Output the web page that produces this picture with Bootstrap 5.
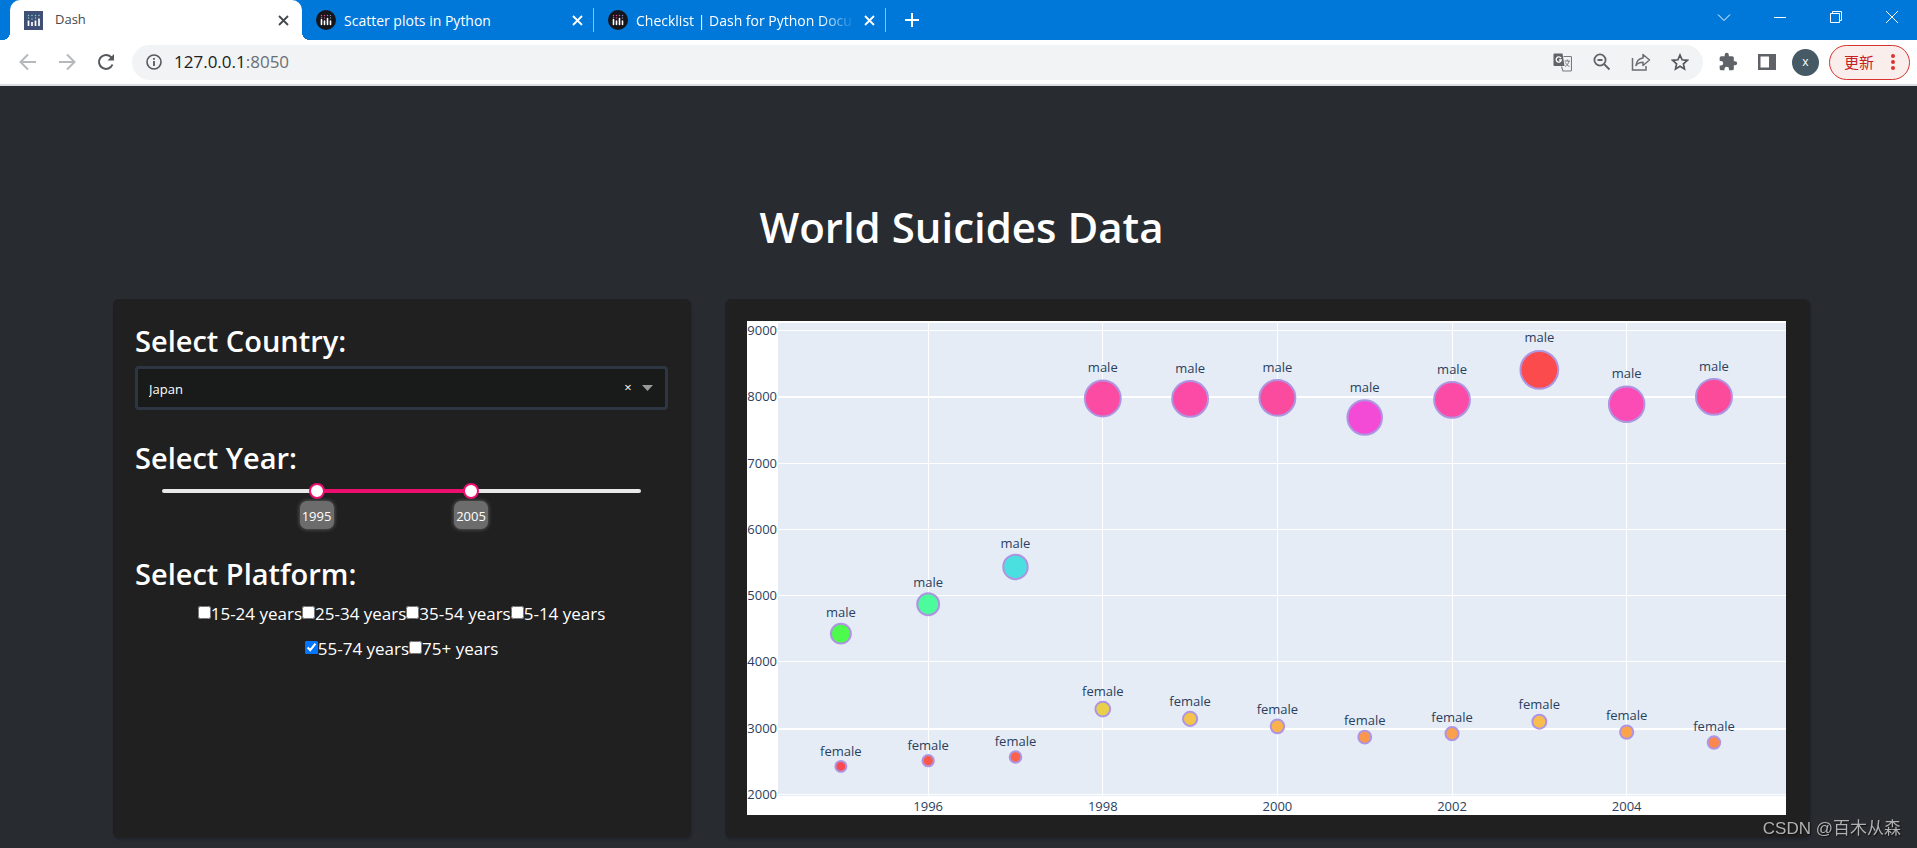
<!DOCTYPE html>
<html lang="en">
<head>
<meta charset="utf-8">
<meta name="viewport" content="width=device-width, initial-scale=1">
<title>Dash</title>
<link rel="stylesheet" href="https://cdn.jsdelivr.net/npm/bootstrap@5.3.0/dist/css/bootstrap.min.css">
<style>
  body { background: #282b2f; color: #fff; font-family: "Open Sans", "Noto Sans CJK SC", sans-serif; }
  svg { display: block; flex: none; }
  button.bare { background: none; border: 0; padding: 0; color: inherit; display: flex; align-items: center; justify-content: center; flex: none; }

  /* window frame */
  .tab-strip { background: #0078d9; height: 40px; padding-left: 10px; }
  .win-tab { width: 292px; height: 40px; padding: 0 6px 0 14px; font-size: 14px; font-weight: 500; color: #fff; position: relative; }
  .win-tab a { color: inherit; text-decoration: none; white-space: nowrap; overflow: hidden; flex: 1 1 auto; }
  .win-tab.current { background: #fff; color: #45484c; border-radius: 10px 10px 0 0; font-size: 13px; font-weight: 400; padding-right: 10px; }
  .win-tab.current::before, .win-tab.current::after { content: ""; position: absolute; bottom: 0; width: 8px; height: 8px; }
  .win-tab.current::before { left: -8px; background: radial-gradient(circle at 0 0, transparent 8px, #fff 8px); }
  .win-tab.current::after { right: -8px; background: radial-gradient(circle at 100% 0, transparent 8px, #fff 8px); }
  .win-tab.ruled::after { content: ""; position: absolute; right: 0; top: 8px; width: 1px; height: 24px; background: #8cc0ef; }
  .fade-end a { -webkit-mask-image: linear-gradient(90deg, #000 84%, transparent); mask-image: linear-gradient(90deg, #000 84%, transparent); }
  button.win-ctl { width: 56px; height: 34px; padding-left: 6px; }
  .tool-row { background: #fff; height: 46px; padding: 0 7px 0 8px; border-bottom: 2px solid #dadce0; color: #5f6368; }
  .tool-row .nav-btn { width: 39px; height: 35px; }
  .omni { background: #f1f3f4; height: 35px; border-radius: 18px; margin: 0 5px 0 7px; padding: 0 4px 0 14px; }
  .omni input { background: none; border: 0; outline: 0; padding: 0; width: 100%; }
  .omni .addr { font-size: 17px; color: #202124; white-space: nowrap; }
  .omni .port { color: #6b6f74; }
  .avatar { width: 27px; height: 27px; background: #455a64; font-size: 12px; color: #fff; }
  .update-btn { height: 35px; width: 81px; border: 1px solid #d8332c; border-radius: 18px; background: #faeeed; color: #c5221f; font-size: 15px; padding: 0 14px; }

  /* dashboard */
  .dash-page { padding: 108px 107px 10px 113px; }
  .dash-title { font-size: 42px; line-height: 66px; font-weight: 600; margin: 0 0 39px; }
  .dash-grid { display: grid; grid-template-columns: minmax(0, 578fr) minmax(0, 1085fr); gap: 34px; }
  .panel { background: #202020; border-radius: 6px; box-shadow: 1px 2px 2px #212530; padding: 22px 23px 23px 22px; }
  .panel h2 { font-size: 29px; line-height: 40px; font-weight: 600; margin: 0; }
  .country { position: relative; margin: 5px 0 28px; }
  .country select { appearance: none; width: 100%; height: 44px; border: 3px solid #2f3643; border-radius: 4px; background: #191b1a; color: #fff; font-size: 13px; padding: 3px 60px 0 11px; }
  .country .clear { position: absolute; right: 34px; top: 12px; width: 12px; height: 20px; font-size: 13px; }
  .country svg { position: absolute; right: 15px; top: 19px; pointer-events: none; }
  .inset { padding: 0 27px; }
  .year-slider { position: relative; height: 52px; margin-bottom: 24px; }
  .rail { position: absolute; top: 11px; left: 0; right: 0; height: 4px; border-radius: 2px; background: #e9e9e9; }
  .rail-fill { position: absolute; top: 0; height: 4px; background: #ed0f70; }
  .year-slider input { -webkit-appearance: none; appearance: none; position: absolute; top: 5px; left: -8px; width: calc(100% + 16px); height: 16px; margin: 0; background: none; pointer-events: none; }
  .year-slider input::-webkit-slider-thumb { -webkit-appearance: none; width: 16px; height: 16px; border: 2px solid #ed0f70; border-radius: 50%; background: #fff; pointer-events: auto; }
  .year-tip { position: absolute; top: 23px; width: 34px; height: 28px; line-height: 30px; margin-left: -17px; border-radius: 7px; background: #6c6c6c; box-shadow: 0 0 4px #6c6c6c; font-size: 13px; text-align: center; }
  .ages { padding-top: 2px; }
  .ages label { display: flex; align-items: center; font-size: 17px; line-height: 35px; white-space: nowrap; }
  .ages input { width: 13px; height: 13px; margin: 0 0 2px; }
  .chart-panel { padding-right: 24px; }
  .chart-box { height: 494px; background: #fff; }
  .chart-box svg { width: 100%; height: 100%; font-family: "Open Sans", sans-serif; font-size: 13px; }
  .chart-box text { fill: #2a3f5f; }
  .stamp { position: fixed; right: 16px; bottom: 6px; font: 17px/26px "Liberation Sans", "Noto Sans CJK SC", sans-serif; color: #b0b1b2; text-shadow: 1px 1px 1px #111; }
</style>
</head>
<body>
<svg width="0" height="0" class="position-absolute" aria-hidden="true">
  <defs>
    <g id="bars">
      <path d="M5.500 9.500v5M8.500 11v3.500M11.500 8.500v6M14.500 11v3.500" stroke="#fff" stroke-width="1.600" stroke-linecap="round"/>
      <path d="M5.500 5.500v.1M5.500 7.500v.1M8.500 5.500v.1M8.500 8v.1" stroke="#e0478c" stroke-width="1.500" stroke-linecap="round"/>
      <path d="M11.500 5.500v.1M14.500 5.500v.1M14.500 8v.1" stroke="#7d86b8" stroke-width="1.500" stroke-linecap="round"/>
    </g>
    <path id="cross" d="M1 1l9 9M10 1l-9 9" fill="none" stroke="currentColor" stroke-width="1.800"/>
  </defs>
</svg>

<header>
  <div class="tab-strip d-flex">
    <div class="win-tab current d-flex align-items-center">
      <svg width="19" height="19" viewBox="0 0 19 19" class="me-2"><path fill="#3f4f75" d="M0 0h19v19H0z"/><path d="M4.500 9.500V15M8 11v4M11.500 9.500V15M15 7.500V15" stroke="#fff" stroke-width="1.700"/><path d="M4.500 4.500v.1M4.500 7v.1M8 4.500v.1M8 8v.1M11.500 4.500v.1M11.500 7v.1M15 4.500v.1" stroke="#7fd8d0" stroke-width="1.500" stroke-linecap="round"/></svg>
      <a href="#" class="ms-1">Dash</a>
      <button class="bare" aria-label="Close tab"><svg width="17" height="11" viewBox="-3 0 17 11"><use href="#cross"/></svg></button>
    </div>
    <div class="win-tab ruled d-flex align-items-center">
      <svg width="20" height="20" viewBox="0 0 20 20" class="me-2"><circle cx="10" cy="10" r="10" fill="#15151a"/><use href="#bars"/></svg>
      <a href="#">Scatter plots in Python</a>
      <button class="bare" aria-label="Close tab"><svg width="17" height="11" viewBox="-1 0 17 11"><use href="#cross"/></svg></button>
    </div>
    <div class="win-tab ruled fade-end d-flex align-items-center">
      <svg width="20" height="20" viewBox="0 0 20 20" class="me-2"><circle cx="10" cy="10" r="10" fill="#15151a"/><use href="#bars"/></svg>
      <a href="#">Checklist | Dash for Python Docu</a>
      <button class="bare ms-2" aria-label="Close tab"><svg width="17" height="11" viewBox="-1 0 17 11"><use href="#cross"/></svg></button>
    </div>
    <button class="bare text-white px-3" aria-label="New tab"><svg width="20" height="16" viewBox="0 0 20 16"><path d="M10 1v14M3 8h14" stroke="currentColor" stroke-width="2"/></svg></button>
    <div class="d-flex ms-auto text-white">
      <button class="bare win-ctl" aria-label="Search tabs"><svg width="14" height="14" viewBox="0 0 14 14" fill="none" stroke="currentColor"><path d="M1 4.500l6 6 6-6"/></svg></button>
      <button class="bare win-ctl" aria-label="Minimize"><svg width="14" height="14" viewBox="0 0 14 14" fill="none" stroke="currentColor"><path d="M1 7.500h12"/></svg></button>
      <button class="bare win-ctl" aria-label="Restore"><svg width="14" height="14" viewBox="0 0 14 14" fill="none" stroke="currentColor"><path d="M1.500 3.500h9v9h-9zM3.500 3.500v-2h9v9h-2"/></svg></button>
      <button class="bare win-ctl" aria-label="Close"><svg width="14" height="14" viewBox="0 0 14 14" fill="none" stroke="currentColor"><path d="M1 1l12 12M13 1L1 13"/></svg></button>
    </div>
  </div>

  <div class="tool-row d-flex align-items-center">
    <button class="bare nav-btn" aria-label="Back"><svg width="20" height="20" viewBox="0 0 20 20" fill="none" stroke="#b6b8bb" stroke-width="2"><path d="M18 10H3M10 2.500L2.500 10l7.500 7.500"/></svg></button>
    <button class="bare nav-btn" aria-label="Forward"><svg width="20" height="20" viewBox="0 0 20 20" fill="none" stroke="#b6b8bb" stroke-width="2"><path d="M2 10h15M10 2.500l7.500 7.500-7.500 7.500"/></svg></button>
    <button class="bare nav-btn" aria-label="Reload"><svg width="20" height="20" viewBox="0 0 20 20" fill="none" stroke="#55585d" stroke-width="2"><path d="M16.500 12.500A7 7 0 1 1 15 5l1.500 1.500"/><path d="M18 2v6.500h-6.500z" fill="#55585d" stroke="none"/></svg></button>
    <div class="omni d-flex align-items-center flex-grow-1">
      <svg width="16" height="16" viewBox="0 0 16 16" class="me-1"><circle cx="8" cy="8" r="7" fill="none" stroke="#55585d" stroke-width="1.600"/><path d="M8 7v5M8 4v1.800" stroke="#55585d" stroke-width="1.800"/></svg>
      <a href="#" class="addr text-decoration-none ms-2">127.0.0.1<span class="port">:8050</span></a>
      <input type="text" aria-label="Address">
      <button class="bare nav-btn" aria-label="Translate"><svg width="19" height="19" viewBox="0 0 19 19"><path d="M1.500.5h8l2 12.500h-10a1 1 0 0 1-1-1V1.500a1 1 0 0 1 1-1z" fill="#5f6368"/><path d="M8 5.200A2.600 2.600 0 1 0 8.300 7H6" fill="none" stroke="#fff" stroke-width="1.300"/><path d="M10.500 3.500h7a1 1 0 0 1 1 1v12.500a1 1 0 0 1-1 1H10l-1.500-4.500" fill="none" stroke="#777b80" stroke-width="1.100"/><path d="M11.500 8H17M14.200 6.500V8M16 8c-.5 2.500-2 4.500-4 5.500M12.500 9.500c.7 1.700 2 3 4 4" fill="none" stroke="#777b80"/></svg></button>
      <button class="bare nav-btn" aria-label="Zoom"><svg width="18" height="18" viewBox="0 0 18 18" fill="none" stroke="#5f6368" stroke-width="1.800"><circle cx="7" cy="7" r="5.600"/><path d="M11 11l5.500 5.500M4.500 7h5"/></svg></button>
      <button class="bare nav-btn" aria-label="Share"><svg width="20" height="18" viewBox="0 0 20 18" fill="none" stroke="#6a6d72" stroke-width="1.500"><path d="M1.500 5v12h13.500v-4"/><path d="M12 1.500L18.500 7 12 12.500V9.300C8.500 9.300 6.500 10.300 5 12.500c.5-4 3-7 7-7.500z" stroke-linejoin="round"/></svg></button>
      <button class="bare nav-btn" aria-label="Bookmark"><svg width="18" height="18" viewBox="0 0 18 18" fill="none" stroke="#55585d" stroke-width="1.700"><path d="M9 2l2.100 4.800 5.200.5-3.900 3.500 1.100 5.100L9 13.200l-4.500 2.700 1.100-5.100L1.700 7.300l5.200-.5z"/></svg></button>
    </div>
    <button class="bare nav-btn" aria-label="Extensions"><svg width="20" height="20" viewBox="0 0 24 24" fill="#5f6368"><path d="M20.500 11H19V7a2 2 0 0 0-2-2h-4V3.500a2.500 2.500 0 0 0-5 0V5H4a2 2 0 0 0-2 2v3.800h1.500a2.700 2.700 0 0 1 0 5.400H2V20a2 2 0 0 0 2 2h3.800v-1.500a2.700 2.700 0 0 1 5.400 0V22H17a2 2 0 0 0 2-2v-4h1.500a2.500 2.500 0 0 0 0-5z"/></svg></button>
    <button class="bare nav-btn" aria-label="Side panel"><svg width="18" height="18" viewBox="0 0 18 18"><path fill="#5f6368" fill-rule="evenodd" d="M0 1h18v16H0zM2.500 3.500v11h8.500v-11z"/></svg></button>
    <button class="bare nav-btn" aria-label="Profile"><span class="avatar rounded-circle d-flex align-items-center justify-content-center">x</span></button>
    <button class="update-btn d-flex align-items-center justify-content-between ms-1">更新 <svg width="4" height="16" viewBox="0 0 4 16" fill="#d8332c"><circle cx="2" cy="2" r="2"/><circle cx="2" cy="8" r="2"/><circle cx="2" cy="14" r="2"/></svg></button>
  </div>
</header>

<main class="dash-page">
  <h1 class="dash-title text-center">World Suicides Data</h1>
  <div class="dash-grid">
    <section class="panel">
      <h2><label for="country">Select Country:</label></h2>
      <div class="country">
        <select id="country"><option>Japan</option></select>
        <button class="bare clear" aria-label="Clear value">×</button>
        <svg width="11" height="6" viewBox="0 0 11 6"><path d="M0 0h11L5.500 6z" fill="#999"/></svg>
      </div>
      <h2>Select Year:</h2>
      <div class="inset">
        <div class="year-slider">
          <div class="rail"><div class="rail-fill" id="fill"></div></div>
          <input type="range" id="from" min="1985" max="2016" value="1995" aria-label="From year">
          <input type="range" id="to" min="1985" max="2016" value="2005" aria-label="To year">
          <output class="year-tip" id="fromTip" for="from">1995</output>
          <output class="year-tip" id="toTip" for="to">2005</output>
        </div>
      </div>
      <h2>Select Platform:</h2>
      <div class="inset ages d-flex flex-wrap justify-content-center">
        <label><input type="checkbox">15-24 years</label>
        <label><input type="checkbox">25-34 years</label>
        <label><input type="checkbox">35-54 years</label>
        <label><input type="checkbox">5-14 years</label>
        <label><input type="checkbox" checked>55-74 years</label>
        <label><input type="checkbox">75+ years</label>
      </div>
    </section>
    <section class="panel chart-panel">
      <div class="chart-box" id="chart"></div>
    </section>
  </div>
</main>
<div class="stamp">CSDN @百木从森</div>

<script src="https://cdn.jsdelivr.net/npm/bootstrap@5.3.0/dist/js/bootstrap.bundle.min.js"></script>
<script>
  const firstYear = 1995;
  const series = [
    { sex: 'male',
      values: [4427, 4870, 5434, 7977, 7971, 7986, 7690, 7956, 8409, 7891, 8001],
      colors: ['#48fb48', '#48fb9a', '#46dfdf', '#fb47a0', '#fb47a5', '#fb479c', '#f447d6', '#fb47a5', '#fb4749', '#fb47b4', '#fb4798'] },
    { sex: 'female',
      values: [2423, 2509, 2566, 3288, 3140, 3027, 2865, 2917, 3098, 2941, 2782],
      colors: ['#fb474c', '#fb5548', '#fb5f48', '#e8d044', '#f3c246', '#fab048', '#fa9548', '#fb9e48', '#f8bc48', '#fba248', '#fb8548'] }
  ];

  function drawChart() {
    const box = document.getElementById('chart');
    const w = box.clientWidth, h = box.clientHeight;
    const m = { left: 31, top: 2, bottom: 19 };
    const pw = w - m.left, ph = h - m.top - m.bottom;
    const x = year => m.left + pw * (year - 1994.28) / 11.545;
    const y = v => m.top + ph * (9116 - v) / 7140;
    let s = `<rect x="${m.left}" y="${m.top}" width="${pw}" height="${ph}" fill="#e5ecf6"/>`;
    for (let v = 2000; v <= 9000; v += 1000) {
      const gy = Math.floor(y(v)), t = v % 5000 === 3000 ? 2 : 1;
      s += `<rect x="${m.left}" y="${gy}" width="${pw}" height="${t}" fill="#fff"/>`;
      s += `<text x="${m.left - 1}" y="${gy + 5}" text-anchor="end">${v}</text>`;
    }
    for (let yr = 1996; yr <= 2004; yr += 2) {
      s += `<rect x="${Math.floor(x(yr))}" y="${m.top}" width="1" height="${ph}" fill="#fff"/>`;
      s += `<text x="${x(yr)}" y="${h - 4}" text-anchor="middle">${yr}</text>`;
    }
    for (const g of series) g.values.forEach((v, i) => {
      const cx = x(firstYear + i), cy = y(v), r = v / 445;
      s += `<circle cx="${cx}" cy="${cy}" r="${r}" fill="${g.colors[i]}" fill-opacity=".98" stroke="#ae95e2" stroke-width="2"/>`;
      s += `<text x="${cx}" y="${Math.round(cy - 4 - 1.24 * r)}" text-anchor="middle">${g.sex}</text>`;
    });
    box.innerHTML = `<svg role="img" aria-label="Yearly counts by sex">${s}</svg>`;
  }

  function placeSlider() {
    const at = {};
    for (const id of ['from', 'to']) {
      const el = document.getElementById(id), tip = document.getElementById(id + 'Tip');
      at[id] = (el.value - el.min) / (el.max - el.min) * 100;
      tip.style.left = at[id] + '%';
      tip.textContent = el.value;
    }
    const fill = document.getElementById('fill');
    fill.style.left = at.from + '%';
    fill.style.width = (at.to - at.from) + '%';
  }

  document.querySelectorAll('.year-slider input').forEach(el => el.addEventListener('input', placeSlider));
  window.addEventListener('resize', drawChart);
  placeSlider();
  drawChart();
</script>
</body>
</html>
